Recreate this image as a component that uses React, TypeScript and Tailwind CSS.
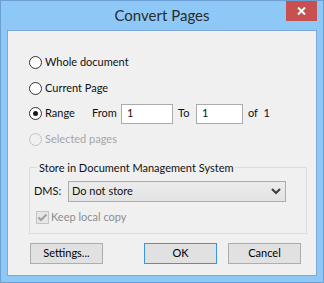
import React from "react";

const font = { fontFamily: "Lato, 'Liberation Sans', sans-serif" };

function Radio({ checked, disabled }: { checked?: boolean; disabled?: boolean }) {
  return (
    <span
      className={
        "flex h-[13px] w-[13px] shrink-0 items-center justify-center rounded-full border " +
        (disabled ? "border-[#c4c4c4] bg-[#f0f0f0]" : "border-[#333333] bg-white")
      }
    >
      {checked ? <span className="h-[5px] w-[5px] rounded-full bg-[#1a1a1a]" /> : null}
    </span>
  );
}

function Button({ label, def }: { label: string; def?: boolean }) {
  return (
    <button
      className={
        "flex h-[21px] w-[73px] items-center justify-center border bg-[#e1e1e1] text-[11px] text-[#000] " +
        (def ? "border-[#3c94e6]" : "border-[#adadad]")
      }
    >
      {label}
    </button>
  );
}

export default function App() {
  return (
    <div style={font} className="h-[283px] w-[324px] border border-[#6e9fd2] bg-[#8ec8f7]">
      <div className="relative flex h-[29px] items-center justify-center">
        <span className="text-[15px] text-[#2b2b2b]">Convert Pages</span>
        <div className="absolute right-[6px] top-0 flex h-[20px] w-[31px] items-center justify-center bg-[#c75050]">
          <svg width="9" height="8" viewBox="0 0 9 8">
            <path d="M1 0.5 L8 7.5 M8 0.5 L1 7.5" stroke="white" strokeWidth="2" />
          </svg>
        </div>
      </div>
      <div className="mx-[6px] h-[246px] border border-[#7ea9d6] bg-[#f0f0f0]">
        <div className="flex flex-col pl-[21px] pt-[18px] text-[11px] text-[#111]">
          <div className="flex h-[26px] items-center gap-[3px]">
            <Radio />
            <span>Whole document</span>
          </div>
          <div className="flex h-[26px] items-center gap-[3px]">
            <Radio />
            <span>Current Page</span>
          </div>
          <div className="flex h-[25px] items-center">
            <Radio checked />
            <span className="ml-[3px] w-[47px]">Range</span>
            <span className="w-[29px]">From</span>
            <div className="flex h-[20px] w-[52px] items-center border border-[#ababab] bg-white pl-[5px]">1</div>
            <span className="ml-[5px] w-[18px]">To</span>
            <div className="flex h-[20px] w-[47px] items-center border border-[#ababab] bg-white pl-[5px]">1</div>
            <span className="ml-[5px]">of&nbsp;&nbsp;1</span>
          </div>
          <div className="flex h-[26px] items-center gap-[3px] text-[#a6a6a6]">
            <Radio disabled />
            <span>Selected pages</span>
          </div>
          <fieldset className="mt-[8px] h-[74px] w-[278px] border border-[#dcdcdc] pl-[4px]">
            <legend className="ml-[3px] px-[2px] leading-[15px] text-[#111]">Store in Document Management System</legend>
            <div className="mt-[6px] flex h-[21px] items-center">
              <span className="w-[34px]">DMS:</span>
              <div className="flex h-[21px] w-[218px] items-center justify-between border border-[#acacac] bg-gradient-to-b from-[#ececec] to-[#e3e3e3] pl-[3px] pr-[4px]">
                <span>Do not store</span>
                <svg width="10" height="7" viewBox="0 0 10 7">
                  <path d="M1 1 L5 5 L9 1" stroke="#404040" strokeWidth="2.2" fill="none" />
                </svg>
              </div>
            </div>
            <div className="mt-[9px] flex h-[13px] items-center gap-[2px] pl-[2px] text-[#8e8e8e]">
              <span className="flex h-[13px] w-[13px] items-center justify-center border border-[#c4c4c4] bg-[#e6e6e6]">
                <svg width="11" height="9" viewBox="0 0 11 9">
                  <path d="M1.5 4.5 L4 7 L9.5 1.5" stroke="#a0a0a0" strokeWidth="2" fill="none" />
                </svg>
              </span>
              <span>Keep local copy</span>
            </div>
          </fieldset>
          <div className="mt-[9px] flex items-center pl-[1px]">
            <Button label="Settings..." />
            <div className="ml-[41px]">
              <Button label="OK" def />
            </div>
            <div className="ml-[11px]">
              <Button label="Cancel" />
            </div>
          </div>
        </div>
      </div>
    </div>
  );
}
